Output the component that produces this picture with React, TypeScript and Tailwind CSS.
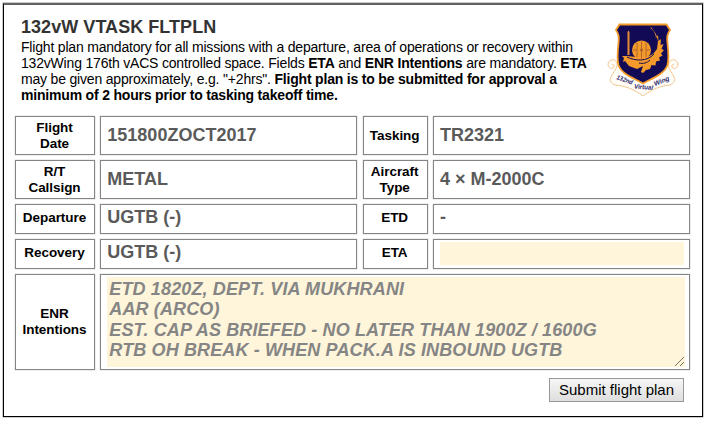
import React from "react";

const label =
  "flex items-center justify-center border border-[#858585] pr-px text-center text-[13.5px] leading-4 font-bold tracking-[-0.05px] text-black shadow-[0_0_0_0.5px_#ddd]";
const cell =
  "flex items-center border border-[#858585] pl-[6px] text-[18px] font-bold whitespace-nowrap text-[#5a5a5a] shadow-[0_0_0_0.5px_#ddd]";

function Crest() {
  return (
    <svg viewBox="0 0 72 76" className="h-[76px] w-[72px]" aria-label="132nd Virtual Wing">
      <g fill="#fffdf8" stroke="#f3c58c" strokeWidth="1">
        <path d="M10 41C8 36 2 37 1 42c0 4 4 6 6 3 1-2-1-3-2-2M10 41c1 5-4 9-6 14-2 4 0 6 4 8 10 1 19 4 28 11 9-7 18-10 27-11 4-2 6-4 4-8-2-5-7-9-5-14" />
        <path d="M62 41c2-5 8-4 9 1 0 4-4 6-6 3-1-2 1-3 2-2" />
      </g>
      <path
        d="M12.500 2.500h47l3.500 5.500c-3 4-3.500 7-2.500 13 1 9 1.500 17 0 22-3 9-14 12.500-24.500 18.500C25.500 55.500 14.500 52 11.500 43c-1.500-5-1-13 0-22 1-6 .5-9-2.500-13z"
        fill="#120a55"
        stroke="#f39a2b"
        strokeWidth="1.8"
      />
      <path d="M20.500 10l1-1.500 1 1.500v23h-2z" fill="#e58b35" />
      <path
        d="M43.500 6c3 2 5 5 5.500 10l2-3 .5 6 2.500-2-.5 6 3-1-2 5 2.500 1-3 3.500 1.500 2-3.500 2 1 3-4 1-.5 4-4-.5-1.500 4-4 1-3 3-2-1 2-6-6 3-8-3-4-5-2 1 1-4-2-2 5 0 9 1 11 0 6-3 4-5 1-8-2-7-5-7z"
        fill="#f39a2b"
      />
      <circle cx="34.500" cy="28" r="9.500" fill="#f39a2b" />
      <path d="M30 21v14M34.500 19.500v17M39 21v14M26 28h4M39 28h4" stroke="#a8602c" strokeWidth="0.9" />
      <circle cx="34.500" cy="28" r="1.500" fill="#a8602c" />
      <path d="M20 35c8 4 20 5 27-3M32 41c4 1 8 0 11-3" fill="none" stroke="#120a55" strokeWidth="1" />
      <g
        fill="#29246b"
        fontSize="6.500"
        fontWeight="700"
        fontStyle="italic"
        fontFamily="Liberation Sans, Arial, sans-serif"
      >
        <text transform="translate(9 57) rotate(20)" textLength="17" lengthAdjust="spacingAndGlyphs">132nd</text>
        <text transform="translate(27 66.500) rotate(4)" textLength="19" lengthAdjust="spacingAndGlyphs">Virtual</text>
        <text transform="translate(48 64) rotate(-22)" textLength="16" lengthAdjust="spacingAndGlyphs">Wing</text>
      </g>
    </svg>
  );
}

export default function App() {
  return (
    <main className="h-[421px] w-[706px] bg-white pt-[3px] pl-[3px] font-['Liberation_Sans',Arial,sans-serif] text-black">
      <section className="h-[414px] w-[700px] border border-t-2 border-black border-t-[#626262] pl-[11px] shadow-[0_0_0_0.5px_#999]">
        <header className="flex h-[111px]">
          <div className="w-[592px] pt-[12px] pl-[6px] text-[14px] leading-4 tracking-[-0.19px] whitespace-nowrap">
            <h1 className="h-[23px] text-[18px] leading-5 font-bold tracking-[0.05px] text-[#333]">132vW VTASK FLTPLN</h1>
            <p className="-mt-[1px]">Flight plan mandatory for all missions with a departure, area of operations or recovery within</p>
            <p>132vWing 176th vACS controlled space. Fields <b>ETA</b> and <b>ENR Intentions</b> are mandatory. <b>ETA</b></p>
            <p>may be given approximately, e.g. "+2hrs". <b>Flight plan is to be submitted for approval a</b></p>
            <p><b>minimum of 2 hours prior to tasking takeoff time.</b></p>
          </div>
          <div className="pt-[17px]"><Crest /></div>
        </header>
        <div className="grid w-[675px] grid-cols-[80px_257px_65px_257px] grid-rows-[39px_39px_30px_30px_96px] gap-x-[5.33px] gap-y-[5px]">
          <div className={label}>Flight<br />Date</div>
          <div className={cell}>151800ZOCT2017</div>
          <div className={label}>Tasking</div>
          <div className={cell}>TR2321</div>
          <div className={label}>R/T<br />Callsign</div>
          <div className={cell}>METAL</div>
          <div className={label}>Aircraft<br />Type</div>
          <div className={cell}>4 × M-2000C</div>
          <div className={`${label} pb-[2px]`}>Departure</div>
          <div className={`${cell} pb-[3px]`}>UGTB (-)</div>
          <div className={`${label} pb-[2px]`}>ETD</div>
          <div className={`${cell} pb-[3px]`}>-</div>
          <div className={`${label} pb-[2px]`}>Recovery</div>
          <div className={`${cell} pb-[3px]`}>UGTB (-)</div>
          <div className={`${label} pb-[2px]`}>ETA</div>
          <div className="border border-[#858585] pt-[2px] pr-[5px] pb-[3px] pl-[6px] shadow-[0_0_0_0.5px_#ddd]">
            <div className="h-full bg-[#fff5da]" />
          </div>
          <div className={label}>ENR<br />Intentions</div>
          <div className="col-span-3 border border-[#858585] pt-[2px] pr-[4px] pb-[2px] pl-[6px] shadow-[0_0_0_0.5px_#ddd]">
            <div className="flex h-full justify-between bg-[#fff5da] pt-[2px] pl-[2px]">
              <div className="text-[18px] leading-[20.4px] font-bold tracking-[0.13px] whitespace-nowrap text-[#858585] italic">
                <p>ETD 1820Z, DEPT. VIA MUKHRANI</p>
                <p>AAR (ARCO)</p>
                <p>EST. CAP AS BRIEFED - NO LATER THAN 1900Z / 1600G</p>
                <p>RTB OH BREAK - WHEN PACK.A IS INBOUND UGTB</p>
              </div>
              <svg viewBox="0 0 12 12" className="h-3 w-3 self-end" stroke="#77705f" strokeWidth="1">
                <path d="M2 11L11 2M7 11L11 7" />
              </svg>
            </div>
          </div>
        </div>
        <div className="flex w-[669px] justify-end pt-[8px]">
          <button className="h-6 w-[135px] border border-[#999] bg-linear-to-b from-[#f6f6f6] to-[#dedede] text-[15px] leading-5 whitespace-nowrap">Submit flight plan</button>
        </div>
      </section>
    </main>
  );
}
